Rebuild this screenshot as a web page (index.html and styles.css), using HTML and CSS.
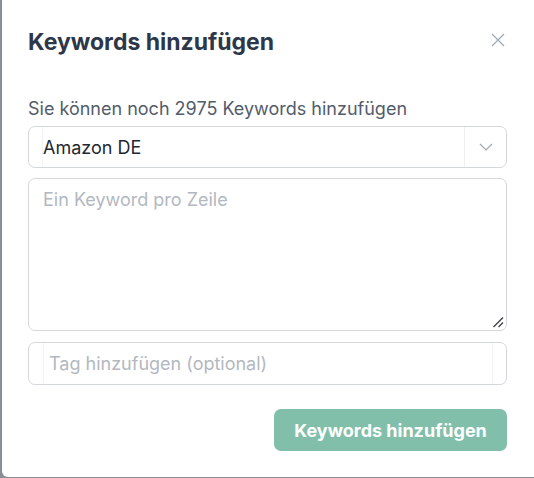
FILE: index.html
```html
<!DOCTYPE html>
<html lang="de">
<head>
<meta charset="utf-8">
<link rel="stylesheet" href="styles.css">
</head>
<body>
<div class="modal">
  <div class="header">
    <h2 class="title">Keywords hinzufügen</h2>
    <button class="close" aria-label="Schließen">
      <svg width="14" height="14" viewBox="0 0 14 14"><path d="M1 1L13 13M13 1L1 13" stroke="#a0a8b4" stroke-width="1.3" fill="none"/></svg>
    </button>
  </div>
  <div class="body">
    <p class="hint">Sie können noch 2975 Keywords hinzufügen</p>
    <div class="select">
      <span class="select-value">Amazon DE</span>
      <span class="select-arrow">
        <svg width="14" height="8" viewBox="0 0 14 8"><path d="M1 1L7 7L13 1" stroke="#a0a8b4" stroke-width="1.2" fill="none"/></svg>
      </span>
    </div>
    <div class="textarea">
      <span class="placeholder">Ein Keyword pro Zeile</span>
      <svg class="grip" width="12" height="12" viewBox="0 0 12 12"><path d="M11 1.5L1.5 11M11 6.5L6.5 11" stroke="#444" stroke-width="1.4" fill="none"/></svg>
    </div>
    <div class="tag">
      <span class="placeholder tag-ph">Tag hinzufügen (optional)</span>
    </div>
  </div>
  <div class="footer">
    <button class="submit">Keywords hinzufügen</button>
  </div>
</div>
</body>
</html>
```
FILE: styles.css
```css
* { box-sizing: border-box; }
html, body { margin: 0; height: 100%; }
body {
  background: #8a8f96;
  font-family: Inter, "Noto Sans", sans-serif;
  overflow: hidden;
}
.modal {
  margin-left: 2px;
  width: 532px;
  height: 477px;
  background: #fff;
  border-radius: 0 0 0 6px;
  padding: 28px 27px 0 26px;
  display: flex;
  flex-direction: column;
}
.header {
  display: flex;
  align-items: center;
  justify-content: space-between;
  height: 28px;
}
.title {
  margin: 0;
  font-size: 23px;
  line-height: 28px;
  font-weight: 700;
  color: #2d3748;
}
.close {
  border: 0;
  background: none;
  padding: 0;
  margin-right: 2px;
  margin-bottom: 4px;
  width: 14px;
  height: 14px;
  display: flex;
}
.body {
  margin-top: 42px;
  display: flex;
  flex-direction: column;
}
.hint {
  margin: 0 0 6px;
  font-size: 18px;
  line-height: 22px;
  color: #525c6b;
}
.select {
  height: 42px;
  border: 1px solid #d4d7dc;
  border-radius: 7px;
  display: flex;
  align-items: center;
  padding-left: 13px;
}
.select-value {
  flex: 1;
  font-size: 18px;
  color: #1f2733;
  border-left: 1px solid #f1f2f4;
  align-self: stretch;
  display: flex;
  align-items: center;
}
.select-arrow {
  width: 42px;
  align-self: stretch;
  border-left: 1px solid #eef0f2;
  display: flex;
  align-items: center;
  justify-content: center;
}
.textarea {
  margin-top: 10px;
  height: 153px;
  border: 1px solid #d4d7dc;
  border-radius: 7px;
  padding: 10px 14px;
  position: relative;
}
.placeholder {
  font-size: 18px;
  line-height: 22px;
  color: #b3b8c0;
}
.grip {
  position: absolute;
  right: 2px;
  bottom: 2px;
}
.tag {
  margin-top: 11px;
  height: 43px;
  border: 1px solid #d4d7dc;
  border-radius: 7px;
  padding: 0 13px 0 14px;
  display: flex;
}
.tag-ph {
  flex: 1;
  display: flex;
  align-items: center;
  padding-left: 5px;
  border-left: 1px solid #f1f2f4;
  border-right: 1px solid #f1f2f4;
}
.footer {
  margin-top: 24px;
  display: flex;
  justify-content: flex-end;
}
.submit {
  height: 42px;
  width: 233px;
  border: 0;
  border-radius: 7px;
  background: #81bfaa;
  color: #fff;
  font-family: Inter, "Noto Sans", sans-serif;
  font-size: 18px;
  font-weight: 700;
}
```
